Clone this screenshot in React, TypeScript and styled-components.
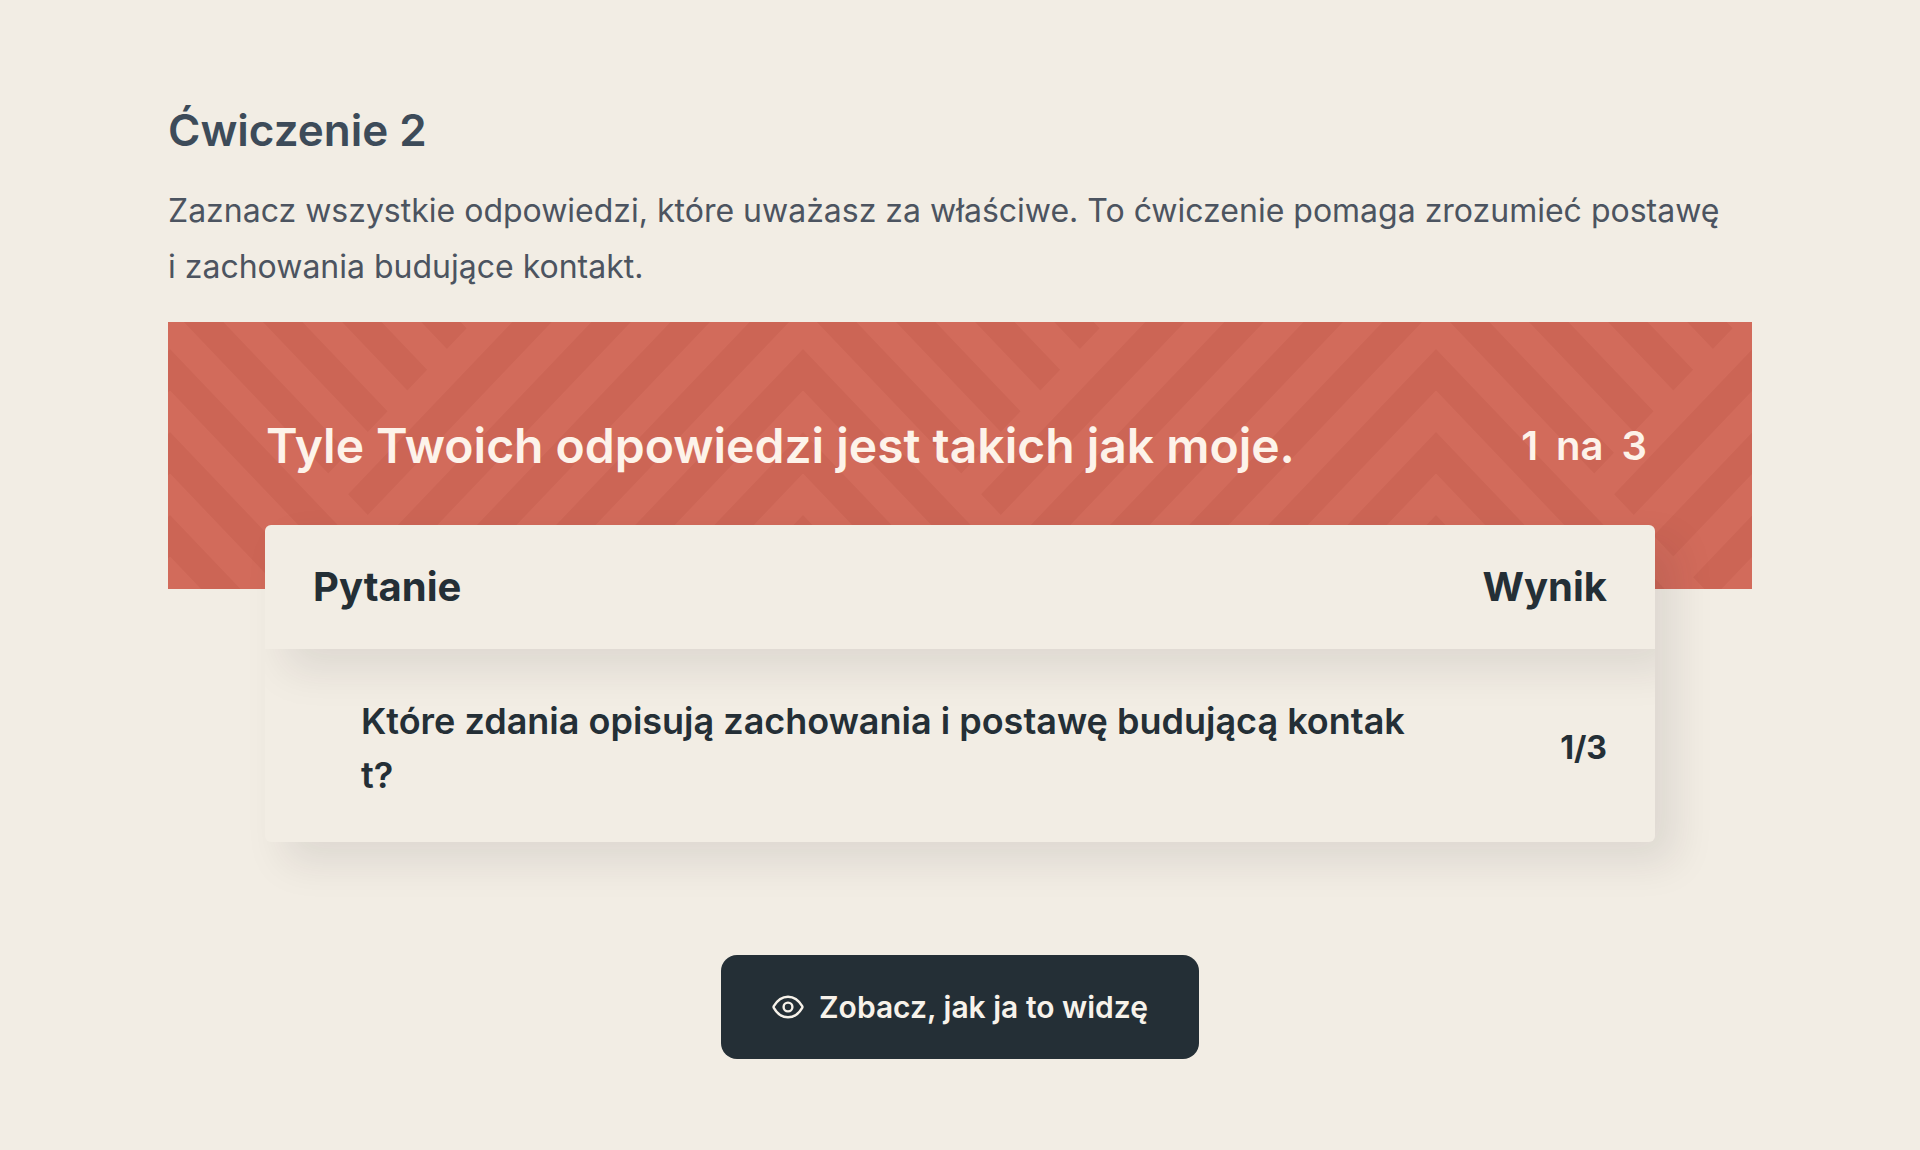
import React from "react";
import styled, { createGlobalStyle } from "styled-components";

const GlobalStyle = createGlobalStyle`
  *, *::before, *::after { box-sizing: border-box; }
  body {
    margin: 0;
    background: #f2ede4;
    color: #242f36;
    font-family: Inter, "Liberation Sans", sans-serif;
  }
`;

const Page = styled.main`
  padding: 102px 168px 90px;
`;

const Title = styled.h1`
  margin: 0 0 25px;
  font-size: 44px;
  line-height: 56px;
  font-weight: 600;
  color: #3d4b59;
`;

const Intro = styled.p`
  margin: 0 0 27px;
  font-size: 32px;
  line-height: 56px;
  color: #4c5460;
`;

const Banner = styled.header`
  position: relative;
  display: flex;
  justify-content: space-between;
  align-items: center;
  padding: 94px 105px 113px 98px;
  background: #d26b5b;
  color: #fdf3ea;
`;

const BannerPattern = styled.svg`
  position: absolute;
  inset: 0;
  width: 100%;
  height: 100%;
`;

const BannerTitle = styled.h2`
  position: relative;
  margin: 0;
  font-size: 48px;
  line-height: 60px;
  font-weight: 600;
`;

const BannerScore = styled.p`
  position: relative;
  display: flex;
  gap: 18px;
  margin: 0;
  font-size: 40px;
  line-height: 60px;
  font-weight: 600;
`;

const ResultTable = styled.table`
  position: relative;
  display: block;
  margin: -64px 97px 0;
  overflow: hidden;
  border-radius: 6px;
  background: #f2ede4;
  box-shadow: 20px 20px 40px rgba(36, 30, 40, 0.1);
`;

const TableHead = styled.thead`
  position: relative;
  display: block;
  box-shadow: 20px 20px 40px rgba(36, 30, 40, 0.1);
`;

const TableBody = styled.tbody`
  position: relative;
  display: block;
`;

const HeadRow = styled.tr`
  display: flex;
  justify-content: space-between;
  padding: 32px 48px;
`;

const HeadCell = styled.th`
  padding: 0;
  font-size: 40px;
  line-height: 60px;
  font-weight: 700;
`;

const BodyRow = styled.tr`
  display: flex;
  align-items: center;
  padding: 45px 48px 40px 96px;
`;

const QuestionCell = styled.td`
  flex: 1;
  padding: 0;
  font-size: 36px;
  line-height: 54px;
  font-weight: 600;
  word-break: break-all;
`;

const ScoreCell = styled.td`
  flex: 0 0 196px;
  padding: 0;
  font-size: 32px;
  line-height: 54px;
  font-weight: 700;
  text-align: right;
`;

const Actions = styled.div`
  display: flex;
  justify-content: center;
  margin-top: 113px;
`;

const RevealButton = styled.button`
  display: flex;
  align-items: center;
  gap: 15px;
  padding: 28px 51px;
  border: 0;
  border-radius: 16px;
  background: #242f36;
  color: #f7f2ea;
  font-family: inherit;
  font-size: 30px;
  line-height: 48px;
  font-weight: 600;
  cursor: pointer;
`;

const fallingLong = [-1, -3, -5, -7, -9, -11];
const fallingShort = [1, 3, 5, 7, 9];
const rising = [8, 10, 12, 14, 16, 18, 20, 22, 24];

/* Interlocking chevrons: the stripes are plain bars on a diagonal grid. */
function Chevrons() {
  return (
    <BannerPattern aria-hidden="true">
      <defs>
        <pattern id="chevrons" x="2" y="0" width="633" height="360" patternUnits="userSpaceOnUse">
          <g transform="matrix(19.78 -20.75 19.78 20.75 0 27)" fill="#cc6555">
            {fallingLong.map((p) => (
              <rect key={p} x={p} y={-14} width={1} height={60} />
            ))}
            {fallingShort.map((p) => (
              <rect key={p} x={p} y={-14} width={1} height={21} />
            ))}
            {rising.map((q) => (
              <rect key={q} x={1} y={q} width={50} height={1} />
            ))}
          </g>
        </pattern>
      </defs>
      <rect width="100%" height="100%" fill="url(#chevrons)" />
    </BannerPattern>
  );
}

function EyeIcon() {
  return (
    <svg width="32" height="24" viewBox="0 0 32 24" fill="none" stroke="currentColor" strokeWidth="2.4" aria-hidden="true">
      <path d="M1.8 11.2C5.4 5 10.2 1.7 16 1.7S26.6 5 30.2 11.2c.3.5.3 1.1 0 1.6C26.6 19 21.8 22.3 16 22.3S5.4 19 1.8 12.8c-.3-.5-.3-1.1 0-1.6Z" />
      <circle cx="16" cy="12" r="4.4" />
    </svg>
  );
}

const results = [
  { question: "Które zdania opisują zachowania i postawę budującą kontakt?", score: "1/3" },
];

export default function App() {
  return (
    <>
      <GlobalStyle />
      <Page>
        <Title>Ćwiczenie 2</Title>
        <Intro>
          Zaznacz wszystkie odpowiedzi, które uważasz za właściwe. To ćwiczenie pomaga zrozumieć postawę
          i&nbsp;zachowania budujące kontakt.
        </Intro>
        <Banner>
          <Chevrons />
          <BannerTitle>Tyle Twoich odpowiedzi jest takich jak moje.</BannerTitle>
          <BannerScore>
            <span>1</span>
            <span>na</span>
            <span>3</span>
          </BannerScore>
        </Banner>
        <ResultTable>
          <TableHead>
            <HeadRow>
              <HeadCell scope="col">Pytanie</HeadCell>
              <HeadCell scope="col">Wynik</HeadCell>
            </HeadRow>
          </TableHead>
          <TableBody>
            {results.map((r) => (
              <BodyRow key={r.question}>
                <QuestionCell>{r.question}</QuestionCell>
                <ScoreCell>{r.score}</ScoreCell>
              </BodyRow>
            ))}
          </TableBody>
        </ResultTable>
        <Actions>
          <RevealButton type="button">
            <EyeIcon />
            Zobacz, jak ja to widzę
          </RevealButton>
        </Actions>
      </Page>
    </>
  );
}
